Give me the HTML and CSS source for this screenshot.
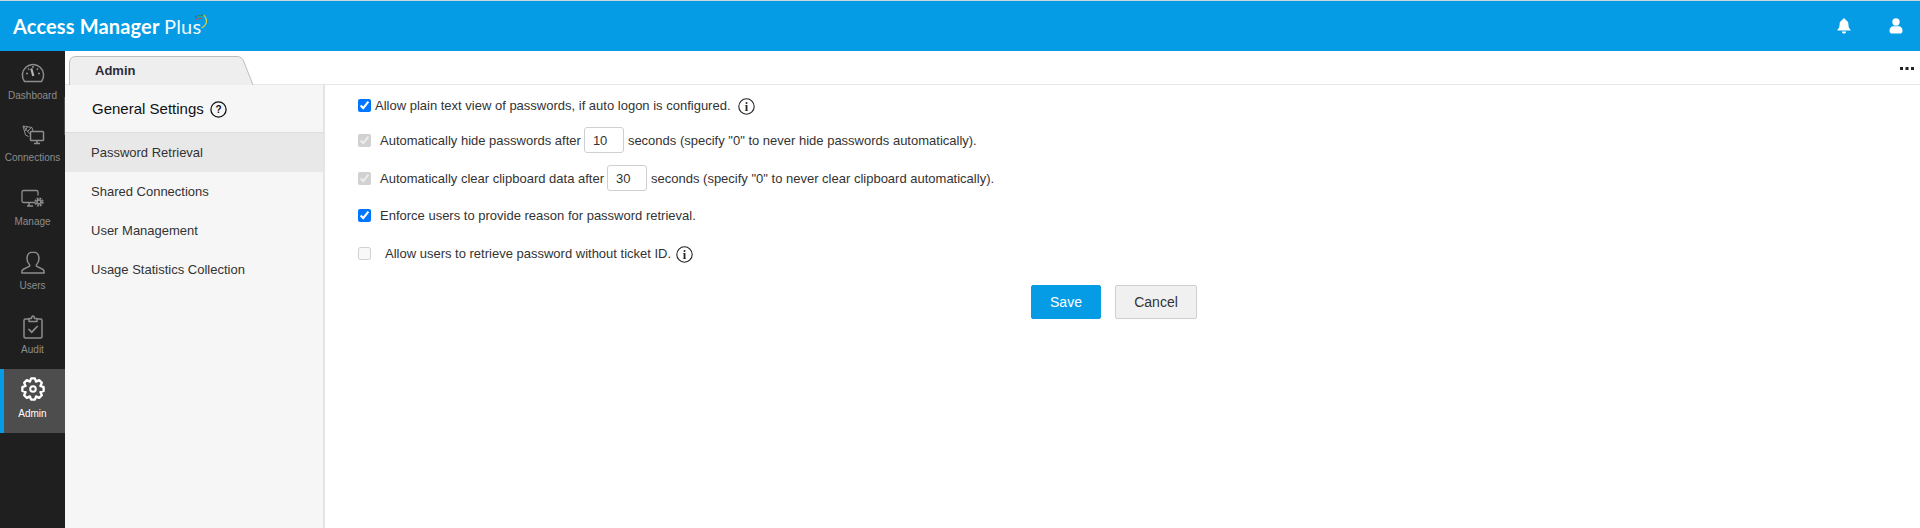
FILE: index.html
```html
<!DOCTYPE html>
<html lang="en">
<head>
<meta charset="utf-8">
<title>Access Manager Plus</title>
<link rel="stylesheet" href="styles.css">
</head>
<body>
<header class="topbar">
  <div class="brand"><span class="brand-main">Access Manager</span> <span class="brand-plus">Plus</span>
    <svg class="swirl" width="14" height="18" viewBox="0 0 14 18" fill="none">
      <path d="M1 3.500 Q5 0.500 9 1.500" stroke="#1f6f8f" stroke-width="1.100"/>
      <path d="M1.500 6 Q4.500 3.500 8 4.500" stroke="#d2453f" stroke-width="1"/>
      <path d="M3 2.500 Q6.500 1 9.500 3" stroke="#4caf50" stroke-width="0.800"/>
      <path d="M10 1 Q14 6 11.500 10.500 Q10 13 7.500 14" stroke="#f2d33b" stroke-width="1.100"/>
    </svg>
  </div>
  <div class="top-actions">
    <svg class="top-bell" width="14" height="16" viewBox="0 0 14 16" fill="#fff"><path d="M7 0.500c.9 0 1.500.6 1.600 1.400C10.600 2.500 11.400 4.200 11.400 6.200c0 2.800.7 4.300 2.100 5.300v1H.5v-1c1.400-1 2.100-2.500 2.100-5.300 0-2 .8-3.700 2.800-4.300C5.500 1.100 6.100.5 7 .5z"/><path d="M4.800 13.500h4.400C9 15 8.100 15.600 7 15.600S5 15 4.800 13.500z"/></svg>
    <svg class="top-user" width="14" height="16" viewBox="0 0 14 16" fill="#fff"><circle cx="7" cy="4" r="3.700"/><path d="M0.500 13c0-3.300 2.300-4.700 4-4.700h5c1.700 0 4 1.400 4 4.700 0 2-1.300 2.600-3 2.600h-7c-1.700 0-3-.6-3-2.600z"/></svg>
  </div>
</header>
<div class="shell">
  <nav class="rail">
    <span class="rail-thumb"></span>
    <a class="rail-item rail-first">
      <svg class="rail-icon" width="24" height="22" viewBox="0 0 24 22" fill="none" stroke="#8d8d8d" stroke-width="1.500"><path d="M3.500 19.500A10.600 10.600 0 1 1 20.500 19.500z" stroke-linejoin="round"/><path d="M12 4v2M5 11.500h2M17 11.500h2M7 6.500l1.200 1.200M17 6.500l-1.200 1.200"/><path d="M10.300 6.500l2 7.500" stroke-width="2.200" stroke="#b5b5b5"/></svg>
      <span class="rail-label">Dashboard</span>
    </a>
    <a class="rail-item">
      <svg class="rail-icon" width="24" height="22" viewBox="0 0 24 22" fill="none" stroke="#8d8d8d" stroke-width="1.200"><path d="M2 2l9 1.500 1.500 5M2 2l2.500 9 3 1.500M2 2l8 9M6.500 2.500L4 7M11 3L6 8" stroke-width="1"/><rect x="9.500" y="7.500" width="13" height="9" rx=".8" fill="#1f1f1f" stroke-width="1.500"/><path d="M13 19.500h6M16 17v2.500" stroke-width="1.500"/></svg>
      <span class="rail-label">Connections</span>
    </a>
    <a class="rail-item rail-tight">
      <svg class="rail-icon" width="24" height="19" viewBox="0 0 24 19" fill="none" stroke="#8d8d8d" stroke-width="1.300"><path d="M14 13H2.500A1.500 1.500 0 0 1 1 11.500V2.500A1.500 1.500 0 0 1 2.500 1h13A1.500 1.500 0 0 1 17 2.500V6"/><path d="M6 16.500h6M8 13v3.500" stroke-width="1.500"/><circle cx="18" cy="12.500" r="3.300" stroke-width="2.600" stroke-dasharray="1.700 .9"/><circle cx="18" cy="12.500" r="1.800" stroke-width="1.300"/></svg>
      <span class="rail-label">Manage</span>
    </a>
    <a class="rail-item">
      <svg class="rail-icon" width="24" height="24" viewBox="0 0 24 24" fill="none" stroke="#8d8d8d" stroke-width="1.500"><path d="M12 1c-3.800 0-6 2.800-6 6.500 0 2.500 1 4.700 2.600 6.200v1.500L2 18.500c-1 .5-1.200 1.500-1.200 3.500h22.400c0-2-.2-3-1.200-3.500l-6.600-3.300v-1.500C17 12.200 18 10 18 7.500 18 3.800 15.800 1 12 1z" stroke-linejoin="round"/></svg>
      <span class="rail-label">Users</span>
    </a>
    <a class="rail-item">
      <svg class="rail-icon" width="20" height="24" viewBox="0 0 20 24" fill="none" stroke="#8d8d8d" stroke-width="1.500"><path d="M6 4H2.500A1.500 1.500 0 0 0 1 5.500v16A1.500 1.500 0 0 0 2.500 23h15a1.500 1.500 0 0 0 1.500-1.500v-16A1.500 1.500 0 0 0 17.500 4H14"/><path d="M6 6.500V3.500h2.500C8.700 1.800 9.200 1 10 1s1.300.8 1.500 2.500H14v3z" stroke-linejoin="round"/><path d="M5.500 14l3.200 3.200 6-6.200" stroke-width="1.700"/></svg>
      <span class="rail-label">Audit</span>
    </a>
    <a class="rail-item rail-active">
      <svg class="rail-icon" width="24" height="24" viewBox="0 0 24 24" fill="none" stroke="#fff" stroke-width="2.300" stroke-linejoin="round"><path d="M10.120 1.360L13.880 1.360 15.060 4.610 18.190 3.150 20.850 5.810 19.390 8.940 22.640 10.120 22.640 13.880 19.390 15.060 20.850 18.190 18.190 20.850 15.060 19.390 13.880 22.640 10.120 22.640 8.940 19.390 5.810 20.850 3.150 18.190 4.610 15.060 1.360 13.880 1.360 10.120 4.610 8.940 3.150 5.810 5.810 3.150 8.940 4.610z"/><circle cx="12" cy="12" r="2.800" stroke-width="2"/></svg>
      <span class="rail-label">Admin</span>
    </a>
  </nav>
  <div class="workspace">
    <div class="tabbar">
      <div class="tab">
        <svg class="tab-shape" width="185" height="29" viewBox="0 0 185 29"><path d="M.5 29V7Q.5 .5 7 .5H168Q173 .5 175 6L184 29" fill="#eeeeee" stroke="#bdbdbd"/></svg>
        <span class="tab-label">Admin</span>
      </div>
      <svg class="more" width="14" height="3" viewBox="0 0 14 3" fill="#222"><rect width="3" height="3"/><rect x="5.500" width="3" height="3"/><rect x="11" width="3" height="3"/></svg>
    </div>
    <div class="body">
      <aside class="panel">
        <div class="panel-title">General Settings
          <svg class="help" width="17" height="17" viewBox="0 0 17 17" fill="none"><circle cx="8.500" cy="8.500" r="7.600" stroke="#111" stroke-width="1.300"/><text x="8.500" y="12" text-anchor="middle" class="help-mark">?</text></svg>
        </div>
        <a class="panel-item panel-active">Password Retrieval</a>
        <a class="panel-item">Shared Connections</a>
        <a class="panel-item">User Management</a>
        <a class="panel-item">Usage Statistics Collection</a>
      </aside>
      <main class="content">
        <div class="row row-first">
          <input type="checkbox" checked>
          <label class="gap-s">Allow plain text view of passwords, if auto logon is configured.</label>
          <svg class="info info-a" width="17" height="17" viewBox="0 0 17 17" fill="none"><circle cx="8.500" cy="8.500" r="7.700" stroke="#222" stroke-width="1.100"/><text x="8.500" y="12.500" text-anchor="middle" class="info-mark">i</text></svg>
        </div>
        <div class="row">
          <input type="checkbox" checked disabled>
          <label class="gap-m">Automatically hide passwords after</label>
          <input class="num" type="text" value="10">
          <span>seconds (specify "0" to never hide passwords automatically).</span>
        </div>
        <div class="row">
          <input type="checkbox" checked disabled>
          <label class="gap-m">Automatically clear clipboard data after</label>
          <input class="num" type="text" value="30">
          <span>seconds (specify "0" to never clear clipboard automatically).</span>
        </div>
        <div class="row row-short">
          <input type="checkbox" checked>
          <label class="gap-m">Enforce users to provide reason for password retrieval.</label>
        </div>
        <div class="row">
          <input type="checkbox" disabled>
          <label class="gap-l">Allow users to retrieve password without ticket ID.</label>
          <svg class="info info-b" width="17" height="17" viewBox="0 0 17 17" fill="none"><circle cx="8.500" cy="8.500" r="7.700" stroke="#222" stroke-width="1.100"/><text x="8.500" y="12.500" text-anchor="middle" class="info-mark">i</text></svg>
        </div>
        <div class="actions">
          <button class="btn btn-primary" type="button">Save</button>
          <button class="btn btn-plain" type="button">Cancel</button>
        </div>
      </main>
    </div>
  </div>
</div>
</body>
</html>
```
FILE: styles.css
```css
* { box-sizing: border-box; }
html, body { margin: 0; height: 100%; }
body {
  display: flex;
  flex-direction: column;
  height: 528px;
  overflow: hidden;
  background: #fff;
  color: #333;
  font-family: "Liberation Sans", Arial, sans-serif;
  font-size: 13px;
}
a { color: inherit; text-decoration: none; }

.topbar {
  flex: none;
  height: 51px;
  display: flex;
  align-items: center;
  justify-content: space-between;
  background: #059ce5;
  border-top: 1px solid #c8d6de;
  padding: 0 17px 0 13px;
}
.brand {
  position: relative;
  color: #fff;
  font-family: Lato, sans-serif;
  font-size: 20px;
  font-weight: 700;
  letter-spacing: .15px;
  white-space: nowrap;
}
.brand-plus { font-weight: 400; color: #f2faff; }
.swirl { position: absolute; left: calc(100% - 7px); top: 0; }
.top-actions { display: flex; align-items: center; gap: 38px; }

.shell { flex: 1; display: flex; min-height: 0; }

.rail {
  position: relative;
  flex: none;
  width: 65px;
  background: #1f1f1f;
  display: flex;
  flex-direction: column;
}
.rail-thumb {
  position: absolute;
  right: 0;
  top: 46px;
  width: 1px;
  height: 38px;
  background: #4a4a4a;
}
.rail-item {
  height: 64px;
  display: flex;
  flex-direction: column;
  align-items: center;
  color: #8d8d8d;
  font-size: 10px;
  padding-top: 10px;
}
.rail-first { height: 62px; }
.rail-icon { display: block; height: 24px; }
.rail-label { margin-top: 5px; line-height: 12px; }
.rail-active {
  background: #4d4d4d;
  border-left: 4px solid #059ce5;
  padding-right: 4px;
  color: #fff;
  padding-top: 8px;
}
.rail-active .rail-label { margin-top: 7px; }

.workspace { flex: 1; min-width: 0; display: flex; flex-direction: column; }
.tabbar {
  flex: none;
  height: 34px;
  display: flex;
  align-items: flex-end;
  justify-content: space-between;
  border-bottom: 1px solid #e6e6e6;
  padding: 0 6px 0 4px;
}
.tab {
  position: relative;
  width: 185px;
  height: 29px;
  margin-bottom: -1px;
  padding: 7px 0 0 26px;
}
.tab-shape { position: absolute; left: 0; top: 0; }
.tab-label {
  position: relative;
  font-size: 13px;
  font-weight: 700;
  color: #2c2c3a;
}
.more { margin-bottom: 14px; }

.body { flex: 1; display: flex; min-height: 0; }
.panel {
  flex: none;
  width: 260px;
  background: #f6f6f6;
  border-right: 2px solid #e4e4e4;
}
.panel-title {
  height: 48px;
  display: flex;
  align-items: center;
  gap: 6px;
  padding-left: 27px;
  font-size: 15px;
  color: #111;
  border-bottom: 1px solid #dedede;
}
.help { flex: none; margin-top: 2px; }
.help-mark { font-size: 10px; font-weight: 700; fill: #111; font-family: "Liberation Sans", sans-serif; }
.panel-item {
  display: flex;
  align-items: center;
  height: 39px;
  padding-left: 26px;
  color: #333;
}
.panel-active { background: #e8e8e8; }

.content { flex: 1; min-width: 0; padding: 5px 0 0 33px; }
.row {
  height: 38px;
  display: flex;
  align-items: center;
  white-space: nowrap;
}
.row-first { height: 31px; }
.row-short { height: 37px; }
.row input[type="checkbox"] { flex: none; width: 13px; height: 13px; margin: 0; }
.gap-s { margin-left: 4px; }
.gap-m { margin-left: 9px; }
.gap-l { margin-left: 14px; }
.num {
  width: 40px;
  height: 26px;
  margin: 0 4px 0 3px;
  padding: 0 8px;
  border: 1px solid #cfcfcf;
  border-radius: 3px;
  font: 13px "Liberation Sans", Arial, sans-serif;
  color: #333;
  background: #fff;
}
.info { flex: none; margin-top: 2px; }
.info-a { margin-left: 7px; }
.info-b { margin-left: 5px; }
.info-mark { font-size: 12px; font-weight: 700; fill: #222; font-family: "Liberation Serif", serif; }

.actions { display: flex; gap: 14px; margin: 13px 0 0 673px; }
.btn {
  height: 34px;
  border-radius: 2px;
  font: 14px "Liberation Sans", Arial, sans-serif;
  padding: 0;
}
.btn-primary { width: 70px; background: #059ce5; border: 1px solid #059ce5; color: #fff; }
.btn-plain { width: 82px; background: #f0f0f0; border: 1px solid #cfcfcf; color: #333; }
```
